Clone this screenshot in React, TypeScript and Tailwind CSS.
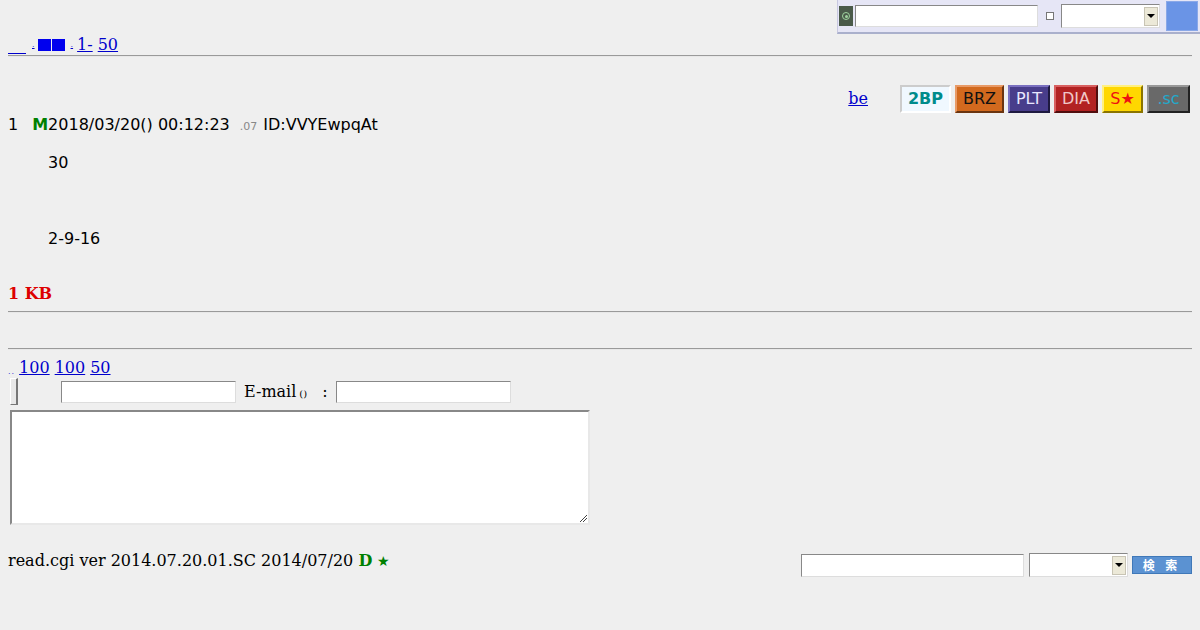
import React from "react";

const serif = "font-['DejaVu_Serif','Liberation_Serif',serif]";
const sans = "font-['DejaVu_Sans','Liberation_Sans',sans-serif]";

function Hr() {
  return <div className="mx-2 h-[2px] border-t border-t-[#9a9a9a] border-b border-b-[#e8e8e8]" />;
}

export default function App() {
  return (
    <div className={`w-[1200px] h-[630px] bg-[#efefef] overflow-hidden text-black ${serif}`}>
      {/* top bar */}
      <div className="flex justify-end h-[34px]">
        <div className="w-[363px] h-[34px] bg-[#e6e6f6] border-l border-l-[#c8c8e0] border-b-2 border-b-[#aab0cc] flex items-center pl-[1px]">
          <div className="w-[14px] h-[20px] bg-[#4a5a4a] flex items-center justify-center">
            <div className="w-[8px] h-[8px] rounded-full border border-[#9fd39f] flex items-center justify-center">
              <div className="w-[3px] h-[3px] rounded-full bg-[#9fd39f]" />
            </div>
          </div>
          <div className="ml-[2px] w-[183px] h-[22px] bg-white border border-t-[#888] border-l-[#888] border-r-[#ddd] border-b-[#ddd]" />
          <div className="ml-[8px] w-[8px] h-[8px] bg-white border border-[#777]" />
          <div className="ml-[7px] w-[99px] h-[24px] bg-white border border-t-[#888] border-l-[#888] border-r-[#ddd] border-b-[#ddd] flex justify-end items-center pr-[1px]">
            <div className="w-[14px] h-[19px] bg-[#ece9d8] border border-[#c8c4b4] flex items-center justify-center">
              <div className="w-0 h-0 border-l-[4px] border-r-[4px] border-t-[4px] border-l-transparent border-r-transparent border-t-black" />
            </div>
          </div>
          <div className="ml-[6px] w-[32px] h-[30px] bg-[#6a94e6] border border-[#8aa8e8]" />
        </div>
      </div>

      {/* nav links */}
      <div className="h-[20px] px-2 flex items-end text-[16px] leading-[19px] text-[#0000cc]">
        <a className="inline-block w-[18px] h-[16px] border-b border-b-[#0000cc]" />
        <span className="ml-[6px] text-[8px] underline">.</span>
        <a className="ml-[3px] underline inline-flex gap-[1px] items-center h-[19px]">
          <span className="inline-block w-[13px] h-[12px] bg-[#0000ee]" />
          <span className="inline-block w-[13px] h-[12px] bg-[#0000ee]" />
        </a>
        <span className="ml-[6px] text-[8px] underline">.</span>
        <a className="ml-[4px] underline">1-</a>
        <a className="ml-[5px] underline">50</a>
      </div>
      <div className="h-[1px]" />
      <Hr />

      {/* tools row */}
      <div className="mt-[28px] flex justify-end items-center pr-[10px] h-[28px]">
        <a className="text-[#0000cc] underline text-[16px] mr-[32px]">be</a>
        <div className={`flex gap-[4px] ${sans} text-[16px]`}>
          <div className="w-[51px] h-[28px] flex items-center justify-center bg-[#f0f8ff] text-[#008b8b] font-bold border-2 border-t-[#ccc] border-l-[#ccc] border-r-[#fff] border-b-[#fff]">2BP</div>
          <div className="w-[49px] h-[28px] flex items-center justify-center bg-[#d2691e] text-[#111] border-2 border-t-[#e89a66] border-l-[#e89a66] border-r-[#6a3410] border-b-[#6a3410]">BRZ</div>
          <div className="w-[42px] h-[28px] flex items-center justify-center bg-[#483d8b] text-[#e8e8ff] border-2 border-t-[#7a70c0] border-l-[#7a70c0] border-r-[#1e1a40] border-b-[#1e1a40]">PLT</div>
          <div className="w-[44px] h-[28px] flex items-center justify-center bg-[#b22222] text-[#f0c8c8] border-2 border-t-[#d86060] border-l-[#d86060] border-r-[#500e0e] border-b-[#500e0e]">DIA</div>
          <div className="w-[41px] h-[28px] flex items-center justify-center bg-[#ffd700] text-[#ee1111] border-2 border-t-[#fff080] border-l-[#fff080] border-r-[#8a7400] border-b-[#8a7400]">S★</div>
          <div className="w-[43px] h-[28px] flex items-center justify-center bg-[#696969] text-[#22aacc] border-2 border-t-[#999] border-l-[#999] border-r-[#222] border-b-[#222]">.sc</div>
        </div>
      </div>

      {/* post */}
      <div className={`${sans} text-[16px] px-2`}>
        <div className="h-[19px] leading-[19px] mt-[2px] flex items-baseline">
          <span>1</span>
          <span className="ml-[14px] text-[#008000] font-bold">M</span>
          <span>2018/03/20() 00:12:23</span>
          <span className="ml-[10px] text-[11px] text-[#888]">.07</span>
          <span className="ml-[6px]">ID:VVYEwpqAt</span>
        </div>
        <div className="pl-[40px] mt-[19px] leading-[19px]">
          <div>30</div>
          <div>&nbsp;</div>
          <div>&nbsp;</div>
          <div>&nbsp;</div>
          <div>2-9-16</div>
        </div>
      </div>

      <div className="px-2 mt-[36px] h-[19px] leading-[19px] text-[#dd0000] font-bold text-[16px]">1 KB</div>
      <div className="h-[8px]" />
      <Hr />
      <div className="h-[35px]" />
      <Hr />

      {/* links */}
      <div className="mt-[7px] px-2 h-[20px] leading-[19px] text-[16px] text-[#0000cc] flex items-end">
        <span className="text-[8px] leading-[10px] tracking-[1px]">..</span>
        <a className="ml-[4px] underline">100</a>
        <a className="ml-[5px] underline">100</a>
        <a className="ml-[5px] underline">50</a>
      </div>

      {/* form row */}
      <div className="mt-[1px] flex items-center h-[27px] pl-[10px] text-[16px]">
        <div className="w-[8px] h-[27px] bg-[#e8e8e8] border border-t-[#fff] border-l-[#fff] border-r-[#777] border-b-[#777] border-r-2" />
        <div className="ml-[43px] w-[175px] h-[22px] bg-white border border-t-[#888] border-l-[#888] border-r-[#ddd] border-b-[#ddd]" />
        <span className="ml-[8px]">E-mail</span>
        <span className="ml-[3px] text-[10px] self-end mb-[4px]">()</span>
        <span className="ml-[15px]">:</span>
        <div className="ml-[8px] w-[175px] h-[22px] bg-white border border-t-[#888] border-l-[#888] border-r-[#ddd] border-b-[#ddd]" />
      </div>

      {/* textarea */}
      <div className="mt-[5px] pl-[10px]">
        <div className="relative w-[580px] h-[115px] bg-white border-2 border-t-[#888] border-l-[#888] border-r-[#e8e8e8] border-b-[#e8e8e8]">
          <svg className="absolute right-0 bottom-0" width="9" height="9" viewBox="0 0 9 9">
            <line x1="1" y1="8" x2="8" y2="1" stroke="#444" strokeWidth="1" />
            <line x1="4" y1="8" x2="8" y2="4" stroke="#444" strokeWidth="1" />
          </svg>
        </div>
      </div>

      {/* footer */}
      <div className="mt-[28px] px-2 flex items-center justify-between">
        <div className="text-[16px] leading-[19px] -mt-[8px]">
          read.cgi ver 2014.07.20.01.SC 2014/07/20 <span className="text-[#008000] font-bold">D</span>{" "}
          <span className="text-[#008000] text-[14px]">★</span>
        </div>
        <div className="flex items-center">
          <div className="w-[223px] h-[23px] bg-white border border-t-[#888] border-l-[#888] border-r-[#ddd] border-b-[#ddd]" />
          <div className="ml-[5px] w-[99px] h-[24px] bg-white border border-t-[#888] border-l-[#888] border-r-[#ddd] border-b-[#ddd] flex justify-end items-center pr-[1px]">
            <div className="w-[14px] h-[19px] bg-[#ece9d8] border border-[#c8c4b4] flex items-center justify-center">
              <div className="w-0 h-0 border-l-[4px] border-r-[4px] border-t-[4px] border-l-transparent border-r-transparent border-t-black" />
            </div>
          </div>
          <div className="ml-[4px] w-[60px] h-[18px] bg-[#5b92d2] border border-[#3f78b8] flex items-center justify-center text-white text-[12px] leading-[16px] tracking-[4px] font-bold font-['Noto_Sans_CJK_JP',sans-serif]">
            検 索
          </div>
        </div>
      </div>
    </div>
  );
}
